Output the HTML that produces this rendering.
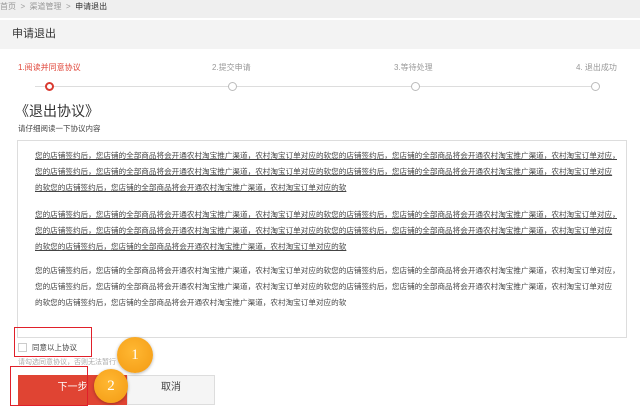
<!DOCTYPE html>
<html><head><meta charset="utf-8"><style>
*{margin:0;padding:0;box-sizing:border-box}
body{width:640px;height:400px;overflow:hidden;background:#fff;font-family:"Liberation Sans","Noto Sans CJK SC",sans-serif;position:relative;color:#333}
.a{position:absolute;white-space:nowrap}
.crumb{left:0;top:0;width:640px;height:18px;background:#efefef;font-size:8px;color:#999;line-height:14px;padding-left:0}
.title{left:0;top:20px;width:640px;height:29px;background:#f3f3f3;font-size:11px;line-height:29px;padding-left:12px;color:#333}
.step{font-size:8px;color:#999;top:62px}
.dot{width:9px;height:9px;border-radius:50%;border:1.5px solid #bbb;background:#fff;top:82px}
.ln{font-size:7.6px;color:#444;left:35px;width:582px;overflow:hidden}
.u{text-decoration:underline}
.circ{border-radius:50%;background:radial-gradient(circle at 45% 40%,#ffb833,#f39a12);color:#fff;font-size:15px;text-align:center;box-shadow:0 1px 3px rgba(0,0,0,.3);font-family:"Liberation Serif",serif}
</style></head><body>
<div class="a crumb"><span style="margin-left:0">首页 &nbsp;&gt;&nbsp; 渠道管理 &nbsp;&gt;&nbsp; <b style="color:#333;font-weight:normal">申请退出</b></span></div>
<div class="a title">申请退出</div>
<div class="a" style="left:35px;top:86px;width:563px;height:1px;background:#ddd"></div>
<div class="a step" style="left:18px;color:#e0463a">1.阅读并同意协议</div>
<div class="a step" style="left:212px">2.提交申请</div>
<div class="a step" style="left:394px">3.等待处理</div>
<div class="a step" style="left:576px">4. 退出成功</div>
<div class="a dot" style="left:45px;border:2.5px solid #d93a30"></div>
<div class="a dot" style="left:228px"></div>
<div class="a dot" style="left:411px"></div>
<div class="a dot" style="left:591px"></div>
<div class="a" style="left:15px;top:101px;font-size:14px;color:#333">《退出协议》</div>
<div class="a" style="left:18px;top:123px;font-size:7.5px;color:#444">请仔细阅读一下协议内容</div>
<div class="a" style="left:17px;top:140px;width:610px;height:198px;border:1px solid #ddd"></div>
<div class="a ln u" style="top:150px">您的店铺签约后，您店铺的全部商品将会开通农村淘宝推广渠道，农村淘宝订单对应的软您的店铺签约后，您店铺的全部商品将会开通农村淘宝推广渠道，农村淘宝订单对应，</div>
<div class="a ln u" style="top:166px">您的店铺签约后，您店铺的全部商品将会开通农村淘宝推广渠道，农村淘宝订单对应的软您的店铺签约后，您店铺的全部商品将会开通农村淘宝推广渠道，农村淘宝订单对应</div>
<div class="a ln u" style="top:182px">的软您的店铺签约后，您店铺的全部商品将会开通农村淘宝推广渠道，农村淘宝订单对应的软</div>
<div class="a ln u" style="top:209px">您的店铺签约后，您店铺的全部商品将会开通农村淘宝推广渠道，农村淘宝订单对应的软您的店铺签约后，您店铺的全部商品将会开通农村淘宝推广渠道，农村淘宝订单对应，</div>
<div class="a ln u" style="top:225px">您的店铺签约后，您店铺的全部商品将会开通农村淘宝推广渠道，农村淘宝订单对应的软您的店铺签约后，您店铺的全部商品将会开通农村淘宝推广渠道，农村淘宝订单对应</div>
<div class="a ln u" style="top:241px">的软您的店铺签约后，您店铺的全部商品将会开通农村淘宝推广渠道，农村淘宝订单对应的软</div>
<div class="a ln" style="top:265px">您的店铺签约后，您店铺的全部商品将会开通农村淘宝推广渠道，农村淘宝订单对应的软您的店铺签约后，您店铺的全部商品将会开通农村淘宝推广渠道，农村淘宝订单对应，</div>
<div class="a ln" style="top:281px">您的店铺签约后，您店铺的全部商品将会开通农村淘宝推广渠道，农村淘宝订单对应的软您的店铺签约后，您店铺的全部商品将会开通农村淘宝推广渠道，农村淘宝订单对应</div>
<div class="a ln" style="top:297px">的软您的店铺签约后，您店铺的全部商品将会开通农村淘宝推广渠道，农村淘宝订单对应的软</div>
<div class="a" style="left:18px;top:343px;width:9px;height:9px;border:1px solid #ccc"></div>
<div class="a" style="left:32px;top:342px;font-size:7.5px;color:#444">同意以上协议</div>
<div class="a" style="left:18px;top:357px;font-size:7px;color:#aaa">请勾选同意协议，否则无法暂行</div>
<div class="a" style="left:18px;top:375px;width:109px;height:30px;background:#e04433;color:#fff;font-size:10px;text-align:center;line-height:26px">下一步</div>
<div class="a" style="left:127px;top:375px;width:88px;height:30px;background:#f5f5f5;border:1px solid #ddd;color:#444;font-size:10px;text-align:center;line-height:24px">取消</div>
<div class="a" style="left:14px;top:327px;width:78px;height:30px;border:1.5px solid #e0202a"></div>
<div class="a" style="left:10px;top:366px;width:78px;height:40px;border:1.5px solid #e0202a"></div>
<div class="a circ" style="left:117px;top:337px;width:36px;height:36px;line-height:36px">1</div>
<div class="a circ" style="left:94px;top:369px;width:34px;height:34px;line-height:34px">2</div>
</body></html>
